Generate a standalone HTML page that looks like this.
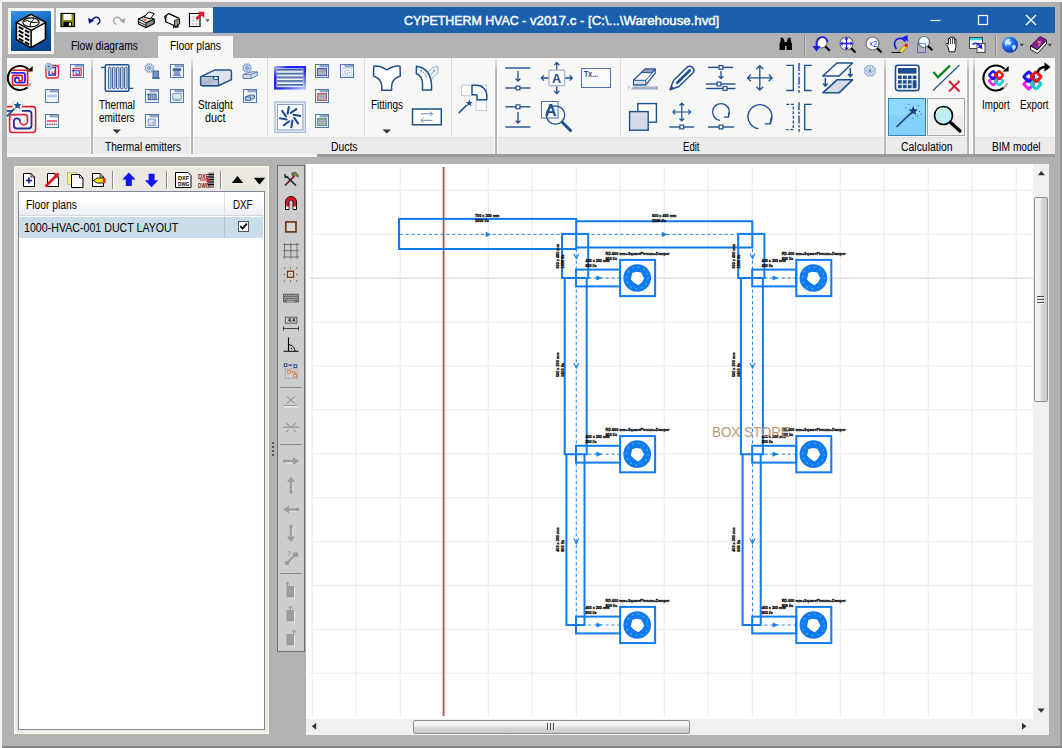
<!DOCTYPE html>
<html><head><meta charset="utf-8"><title>CYPETHERM HVAC</title>
<style>
*{box-sizing:border-box;margin:0;padding:0}
html,body{width:1062px;height:748px;overflow:hidden}
body{background:#b2b2b2;font-family:"Liberation Sans",sans-serif;font-size:12px;color:#000;position:relative}
.a{position:absolute}
.t{position:absolute;white-space:nowrap;line-height:1;transform-origin:0 0}
svg{position:absolute;left:0;top:0;overflow:visible}
</style></head><body>
<div class="a" style="left:0px;top:0px;width:1062px;height:2px;background:#f2f2f2;"></div>
<div class="a" style="left:0px;top:0px;width:2px;height:748px;background:#f2f2f2;"></div>
<div class="a" style="left:1060.4px;top:2px;width:1.6px;height:746px;background:#979797;"></div>
<div class="a" style="left:2px;top:746.2px;width:1060px;height:1.8px;background:#858585;"></div>
<div class="a" style="left:8px;top:8px;width:46px;height:46px;background:#f4f4f4;"></div>
<div class="a" style="left:11px;top:11px;width:40px;height:40px;background:linear-gradient(165deg,#3a96ee 0%,#0d5db0 45%,#043f85 100%);"></div>
<div class="a" style="left:56px;top:8px;width:157px;height:24px;background:#f7f7f5;"></div>
<div class="a" style="left:213px;top:7px;width:842px;height:26px;background:#1a60ab;"></div>
<div class="a" style="left:158px;top:36px;width:75px;height:23px;background:#f7f7f5;"></div>
<div class="a" style="left:7px;top:58px;width:1048px;height:96px;background:#f7f7f5;"></div>
<div class="a" style="left:7px;top:137px;width:83px;height:17px;background:#ebebeb;"></div>
<div class="a" style="left:7px;top:137px;width:83px;height:1px;background:#dfdfdf;"></div>
<div class="a" style="left:94px;top:137px;width:96px;height:17px;background:#ebebeb;"></div>
<div class="a" style="left:94px;top:137px;width:96px;height:1px;background:#dfdfdf;"></div>
<div class="a" style="left:194px;top:137px;width:300px;height:17px;background:#ebebeb;"></div>
<div class="a" style="left:194px;top:137px;width:300px;height:1px;background:#dfdfdf;"></div>
<div class="a" style="left:498px;top:137px;width:385px;height:17px;background:#ebebeb;"></div>
<div class="a" style="left:498px;top:137px;width:385px;height:1px;background:#dfdfdf;"></div>
<div class="a" style="left:887px;top:137px;width:80px;height:17px;background:#ebebeb;"></div>
<div class="a" style="left:887px;top:137px;width:80px;height:1px;background:#dfdfdf;"></div>
<div class="a" style="left:975px;top:137px;width:80px;height:17px;background:#ebebeb;"></div>
<div class="a" style="left:975px;top:137px;width:80px;height:1px;background:#dfdfdf;"></div>
<div class="a" style="left:7px;top:154px;width:310px;height:3px;background:#f4f4f4;"></div>
<div class="a" style="left:317px;top:154px;width:738px;height:3px;background:#9b9b9b;"></div>
<div class="a" style="left:91px;top:58px;width:2.2px;height:96px;background:linear-gradient(90deg,#c9c9c9,#a9a9a9 55%,#c4c4c4);"></div>
<div class="a" style="left:91px;top:58px;width:2.2px;height:14px;background:linear-gradient(rgba(247,247,245,0.85),rgba(247,247,245,0));"></div>
<div class="a" style="left:191px;top:58px;width:2.2px;height:96px;background:linear-gradient(90deg,#c9c9c9,#a9a9a9 55%,#c4c4c4);"></div>
<div class="a" style="left:191px;top:58px;width:2.2px;height:14px;background:linear-gradient(rgba(247,247,245,0.85),rgba(247,247,245,0));"></div>
<div class="a" style="left:495.3px;top:58px;width:2.2px;height:96px;background:linear-gradient(90deg,#c9c9c9,#a9a9a9 55%,#c4c4c4);"></div>
<div class="a" style="left:495.3px;top:58px;width:2.2px;height:14px;background:linear-gradient(rgba(247,247,245,0.85),rgba(247,247,245,0));"></div>
<div class="a" style="left:884px;top:58px;width:2.2px;height:96px;background:linear-gradient(90deg,#c9c9c9,#a9a9a9 55%,#c4c4c4);"></div>
<div class="a" style="left:884px;top:58px;width:2.2px;height:14px;background:linear-gradient(rgba(247,247,245,0.85),rgba(247,247,245,0));"></div>
<div class="a" style="left:967.2px;top:58px;width:2.2px;height:96px;background:linear-gradient(90deg,#c9c9c9,#a9a9a9 55%,#c4c4c4);"></div>
<div class="a" style="left:967.2px;top:58px;width:2.2px;height:14px;background:linear-gradient(rgba(247,247,245,0.85),rgba(247,247,245,0));"></div>
<div class="a" style="left:973px;top:58px;width:2.2px;height:96px;background:linear-gradient(90deg,#c9c9c9,#a9a9a9 55%,#c4c4c4);"></div>
<div class="a" style="left:973px;top:58px;width:2.2px;height:14px;background:linear-gradient(rgba(247,247,245,0.85),rgba(247,247,245,0));"></div>
<div class="a" style="left:267px;top:58px;width:1px;height:78px;background:#dcdcdc;"></div>
<div class="a" style="left:268px;top:58px;width:1px;height:78px;background:#fcfcfc;"></div>
<div class="a" style="left:364px;top:58px;width:1px;height:78px;background:#dcdcdc;"></div>
<div class="a" style="left:365px;top:58px;width:1px;height:78px;background:#fcfcfc;"></div>
<div class="a" style="left:451px;top:58px;width:1px;height:78px;background:#dcdcdc;"></div>
<div class="a" style="left:452px;top:58px;width:1px;height:78px;background:#fcfcfc;"></div>
<div class="a" style="left:620px;top:58px;width:1px;height:78px;background:#dcdcdc;"></div>
<div class="a" style="left:621px;top:58px;width:1px;height:78px;background:#fcfcfc;"></div>
<div class="a" style="left:888px;top:98px;width:38px;height:38px;background:linear-gradient(#8dd8fd 0%,#8dd8fd 45%,#84d0fc 46%,#84d0fc 100%);border:1px solid #3482bd"></div>
<div class="a" style="left:927px;top:98px;width:38px;height:38px;background:linear-gradient(#f6f6f4 0%,#f6f6f4 45%,#ededeb 46%,#ededeb 100%);border:1px solid #a3a3a3;box-shadow:inset 0 0 0 1px #f8f8f8"></div>
<div class="a" style="left:13.2px;top:164.6px;width:256.7px;height:570.3px;background:#ebe8e2;border:0.8px solid #b3b09f;box-shadow:inset 0 0 0 1.2px #fdfdfb"></div>
<div class="a" style="left:18px;top:191px;width:247px;height:539px;background:#fff;border:1px solid #7f889b"></div>
<div class="a" style="left:19px;top:192px;width:243.5px;height:23px;background:linear-gradient(#ffffff 0%,#ffffff 35%,#eceef3 100%);"></div>
<div class="a" style="left:19px;top:215px;width:243.5px;height:1px;background:#d5d8de;"></div>
<div class="a" style="left:224px;top:192px;width:1px;height:45px;background:#dcdfe4;"></div>
<div class="a" style="left:19px;top:217px;width:243.5px;height:20.5px;background:#c9dde8;"></div>
<div class="a" style="left:224px;top:217px;width:1px;height:20.5px;background:#b4c6d2;"></div>
<div class="a" style="left:238px;top:221px;width:11px;height:11px;background:#fff;border:1px solid #555"></div>
<div class="a" style="left:112px;top:171px;width:1px;height:18px;background:#8f8f8f;"></div>
<div class="a" style="left:113px;top:171px;width:1px;height:18px;background:#fbfbfb;"></div>
<div class="a" style="left:166px;top:171px;width:1px;height:18px;background:#8f8f8f;"></div>
<div class="a" style="left:167px;top:171px;width:1px;height:18px;background:#fbfbfb;"></div>
<div class="a" style="left:220px;top:171px;width:1px;height:18px;background:#8f8f8f;"></div>
<div class="a" style="left:221px;top:171px;width:1px;height:18px;background:#fbfbfb;"></div>
<div class="a" style="left:272px;top:442px;width:2px;height:2px;background:#5a5a5a;"></div>
<div class="a" style="left:272px;top:446px;width:2px;height:2px;background:#5a5a5a;"></div>
<div class="a" style="left:272px;top:450px;width:2px;height:2px;background:#5a5a5a;"></div>
<div class="a" style="left:272px;top:454px;width:2px;height:2px;background:#5a5a5a;"></div>
<div class="a" style="left:277px;top:165px;width:28px;height:487px;background:#cdcdcd;border:1px solid #6e6e6e"></div>
<div class="a" style="left:280px;top:387px;width:22px;height:1px;background:#8a8a8a;"></div>
<div class="a" style="left:280px;top:444px;width:22px;height:1px;background:#8a8a8a;"></div>
<div class="a" style="left:280px;top:573px;width:22px;height:1px;background:#8a8a8a;"></div>
<div class="a" style="left:306px;top:164px;width:727px;height:555px;background:#fff;"></div>
<div class="a" style="left:1033px;top:164px;width:16px;height:555px;background:#f0f0f0;"></div>
<div class="a" style="left:306px;top:719px;width:743px;height:16px;background:#f0f0f0;"></div>
<div class="a" style="left:1033.5px;top:197px;width:14px;height:205px;background:linear-gradient(90deg,#f7f7f7 0%,#ececec 45%,#d6d6da 55%,#cbcbd0 100%);border:1px solid #8e8e8e;border-radius:2px"></div>
<div class="a" style="left:1036.5px;top:296px;width:7.5px;height:1px;background:#4a4a4a;"></div>
<div class="a" style="left:1036.5px;top:297px;width:7.5px;height:1px;background:#f4f4f4;"></div>
<div class="a" style="left:1036.5px;top:299px;width:7.5px;height:1px;background:#4a4a4a;"></div>
<div class="a" style="left:1036.5px;top:300px;width:7.5px;height:1px;background:#f4f4f4;"></div>
<div class="a" style="left:1036.5px;top:302px;width:7.5px;height:1px;background:#4a4a4a;"></div>
<div class="a" style="left:1036.5px;top:303px;width:7.5px;height:1px;background:#f4f4f4;"></div>
<div class="a" style="left:412.5px;top:719.5px;width:277px;height:14px;background:linear-gradient(#f7f7f7 0%,#ececec 45%,#d8d8d8 55%,#c8c8c8 100%);border:1px solid #8e8e8e;border-radius:2px"></div>
<div class="a" style="left:547px;top:723px;width:1px;height:7px;background:#4a4a4a;"></div>
<div class="a" style="left:548px;top:723px;width:1px;height:7px;background:#f4f4f4;"></div>
<div class="a" style="left:550px;top:723px;width:1px;height:7px;background:#4a4a4a;"></div>
<div class="a" style="left:551px;top:723px;width:1px;height:7px;background:#f4f4f4;"></div>
<div class="a" style="left:553px;top:723px;width:1px;height:7px;background:#4a4a4a;"></div>
<div class="a" style="left:554px;top:723px;width:1px;height:7px;background:#f4f4f4;"></div>
<svg width="1062" height="748" viewBox="0 0 1062 748">
<path d="M930.5 20.5h10" stroke="#fff" stroke-width="1.2" fill="none"/>
<rect x="978.5" y="15.5" width="9" height="9" stroke="#fff" stroke-width="1.2" fill="none"/>
<path d="M1026 15l10 10M1036 15l-10 10" stroke="#fff" stroke-width="1.4" fill="none"/>
<path d="M112.5 129.5h8.5l-4.25 4z" fill="#333"/>
<path d="M382.5 129.5h8.5l-4.25 4z" fill="#333"/>
<path d="M240.3 226l2.3 2.6 4.3-5" stroke="#000" stroke-width="1.7" fill="none"/>
<path d="M1037.8 175.2l3.600-4.200 3.600 4.200z" fill="#333"/>
<path d="M1037.5 708.500h7.200l-3.600 4.200z" fill="#333"/>
<path d="M316.2 722.800v7l-4.400-3.500z" fill="#333"/>
<path d="M1022 722.800v7l4.400-3.500z" fill="#333"/>
<rect x="311.55" y="167" width="1.5" height="549" fill="#f0f0f0"/>
<rect x="355.55" y="167" width="1.5" height="549" fill="#f0f0f0"/>
<rect x="399.55" y="167" width="1.5" height="549" fill="#f0f0f0"/>
<rect x="487.55" y="167" width="1.5" height="549" fill="#f0f0f0"/>
<rect x="531.55" y="167" width="1.5" height="549" fill="#f0f0f0"/>
<rect x="575.55" y="167" width="1.5" height="549" fill="#f0f0f0"/>
<rect x="619.55" y="167" width="1.5" height="549" fill="#f0f0f0"/>
<rect x="663.55" y="167" width="1.5" height="549" fill="#f0f0f0"/>
<rect x="707.55" y="167" width="1.5" height="549" fill="#f0f0f0"/>
<rect x="751.55" y="167" width="1.5" height="549" fill="#f0f0f0"/>
<rect x="795.55" y="167" width="1.5" height="549" fill="#f0f0f0"/>
<rect x="839.55" y="167" width="1.5" height="549" fill="#f0f0f0"/>
<rect x="883.55" y="167" width="1.5" height="549" fill="#f0f0f0"/>
<rect x="927.55" y="167" width="1.5" height="549" fill="#f0f0f0"/>
<rect x="971.55" y="167" width="1.5" height="549" fill="#f0f0f0"/>
<rect x="1015.55" y="167" width="1.5" height="549" fill="#f0f0f0"/>
<rect x="310" y="189.65" width="723" height="1.5" fill="#f0f0f0"/>
<rect x="310" y="233.55" width="723" height="1.5" fill="#f0f0f0"/>
<rect x="310" y="277.65" width="723" height="1.1" fill="#d2d2d2"/>
<rect x="310" y="321.35" width="723" height="1.5" fill="#f0f0f0"/>
<rect x="310" y="365.25" width="723" height="1.5" fill="#f0f0f0"/>
<rect x="310" y="409.15" width="723" height="1.5" fill="#f0f0f0"/>
<rect x="310" y="453.05" width="723" height="1.5" fill="#f0f0f0"/>
<rect x="310" y="496.95" width="723" height="1.5" fill="#f0f0f0"/>
<rect x="310" y="540.85" width="723" height="1.5" fill="#f0f0f0"/>
<rect x="310" y="584.75" width="723" height="1.5" fill="#f0f0f0"/>
<rect x="310" y="628.65" width="723" height="1.5" fill="#f0f0f0"/>
<rect x="310" y="672.55" width="723" height="1.5" fill="#f0f0f0"/>
<rect x="442.2" y="167" width="0.9" height="549" fill="#dcc0aa"/><rect x="443" y="167" width="1.5" height="549" fill="#9e5c4e"/><rect x="444.4" y="167" width="0.7" height="549" fill="#dca3ab"/>
<rect x="399" y="218.9" width="177.20" height="30.10" fill="none" stroke="#0f7bef" stroke-width="2"/>
<path d="M576.2 221.3H752.3V247.5H576.2" fill="none" stroke="#0f7bef" stroke-width="2"/>
<path d="M400 234.4L752 234.4" stroke="#0f7bef" stroke-width="0.9" stroke-dasharray="3 2.8" fill="none"/>
<path d="M486 232.3L490.2 234.4L486 236.5z" fill="#0f7bef" stroke="#0f7bef" stroke-width="0.7"/>
<path d="M662.3 232.3L666.5 234.4L662.3 236.5z" fill="#0f7bef" stroke="#0f7bef" stroke-width="0.7"/>
<rect x="562" y="233.9" width="26.20" height="44.10" fill="none" stroke="#0f7bef" stroke-width="2"/>
<path d="M564.7 278V454.2H586.7V278" fill="none" stroke="#0f7bef" stroke-width="2"/>
<path d="M566.4 454.2V624.9H584.5V454.2" fill="none" stroke="#0f7bef" stroke-width="2"/>
<path d="M576.3 249L576.3 616" stroke="#0f7bef" stroke-width="0.9" stroke-dasharray="3 2.8" fill="none"/>
<path d="M573.6999999999999 253.5L576.3 258.5L578.9 253.5" fill="none" stroke="#0f7bef" stroke-width="1.1"/>
<path d="M573.6999999999999 363.0L576.3 368.0L578.9 363.0" fill="none" stroke="#0f7bef" stroke-width="1.1"/>
<path d="M573.6999999999999 538.5L576.3 543.5L578.9 538.5" fill="none" stroke="#0f7bef" stroke-width="1.1"/>
<rect x="576.0" y="269.6" width="44.00" height="16.80" fill="none" stroke="#0f7bef" stroke-width="2"/>
<path d="M588.3 278L620 278" stroke="#0f7bef" stroke-width="0.9" stroke-dasharray="3 2.8" fill="none"/>
<path d="M596.8 275.9L601.0 278L596.8 280.1z" fill="#0f7bef" stroke="#0f7bef" stroke-width="0.7"/>
<rect x="620.1" y="259.9" width="35.00" height="36.20" fill="none" stroke="#0f7bef" stroke-width="2"/>
<circle cx="637.2" cy="278" r="13.85" fill="#0f7bef"/>
<polygon points="632.2,273.1 636.2,271.7 641.1,272.5 644.1,278.4 641.7,282.4 638.4,285.2 633.8,282.6 630.9,279.4" fill="#fff"/>
<circle cx="637.2" cy="278" r="10.8" fill="none" stroke="#8ec0f8" stroke-width="1.1" stroke-dasharray="1.2 4.5"/>
<rect x="576.0" y="445.8" width="44.00" height="16.80" fill="none" stroke="#0f7bef" stroke-width="2"/>
<path d="M588.3 454.2L620 454.2" stroke="#0f7bef" stroke-width="0.9" stroke-dasharray="3 2.8" fill="none"/>
<path d="M596.8 452.09999999999997L601.0 454.2L596.8 456.3z" fill="#0f7bef" stroke="#0f7bef" stroke-width="0.7"/>
<rect x="620.1" y="436.09999999999997" width="35.00" height="36.20" fill="none" stroke="#0f7bef" stroke-width="2"/>
<circle cx="637.2" cy="454.2" r="13.85" fill="#0f7bef"/>
<polygon points="632.2,449.3 636.2,447.9 641.1,448.7 644.1,454.6 641.7,458.6 638.4,461.4 633.8,458.8 630.9,455.6" fill="#fff"/>
<circle cx="637.2" cy="454.2" r="10.8" fill="none" stroke="#8ec0f8" stroke-width="1.1" stroke-dasharray="1.2 4.5"/>
<rect x="576.0" y="616.6" width="44.00" height="16.80" fill="none" stroke="#0f7bef" stroke-width="2"/>
<path d="M588.3 625L620 625" stroke="#0f7bef" stroke-width="0.9" stroke-dasharray="3 2.8" fill="none"/>
<path d="M596.8 622.9L601.0 625L596.8 627.1z" fill="#0f7bef" stroke="#0f7bef" stroke-width="0.7"/>
<rect x="620.1" y="606.9" width="35.00" height="36.20" fill="none" stroke="#0f7bef" stroke-width="2"/>
<circle cx="637.2" cy="625" r="13.85" fill="#0f7bef"/>
<polygon points="632.2,620.1 636.2,618.7 641.1,619.5 644.1,625.4 641.7,629.4 638.4,632.2 633.8,629.6 630.9,626.4" fill="#fff"/>
<circle cx="637.2" cy="625" r="10.8" fill="none" stroke="#8ec0f8" stroke-width="1.1" stroke-dasharray="1.2 4.5"/>
<rect x="738.2" y="233.9" width="26.20" height="44.10" fill="none" stroke="#0f7bef" stroke-width="2"/>
<path d="M740.9000000000001 278V454.2H762.9000000000001V278" fill="none" stroke="#0f7bef" stroke-width="2"/>
<path d="M742.5999999999999 454.2V624.9H760.7V454.2" fill="none" stroke="#0f7bef" stroke-width="2"/>
<path d="M752.5 249L752.5 616" stroke="#0f7bef" stroke-width="0.9" stroke-dasharray="3 2.8" fill="none"/>
<path d="M749.9 253.5L752.5 258.5L755.1 253.5" fill="none" stroke="#0f7bef" stroke-width="1.1"/>
<path d="M749.9 363.0L752.5 368.0L755.1 363.0" fill="none" stroke="#0f7bef" stroke-width="1.1"/>
<path d="M749.9 538.5L752.5 543.5L755.1 538.5" fill="none" stroke="#0f7bef" stroke-width="1.1"/>
<rect x="752.2" y="269.6" width="44.00" height="16.80" fill="none" stroke="#0f7bef" stroke-width="2"/>
<path d="M764.5 278L796.2 278" stroke="#0f7bef" stroke-width="0.9" stroke-dasharray="3 2.8" fill="none"/>
<path d="M773.0 275.9L777.2 278L773.0 280.1z" fill="#0f7bef" stroke="#0f7bef" stroke-width="0.7"/>
<rect x="796.3000000000001" y="259.9" width="35.00" height="36.20" fill="none" stroke="#0f7bef" stroke-width="2"/>
<circle cx="813.4000000000001" cy="278" r="13.85" fill="#0f7bef"/>
<polygon points="808.4,273.1 812.4,271.7 817.3,272.5 820.3,278.4 817.9,282.4 814.6,285.2 810.0,282.6 807.1,279.4" fill="#fff"/>
<circle cx="813.4000000000001" cy="278" r="10.8" fill="none" stroke="#8ec0f8" stroke-width="1.1" stroke-dasharray="1.2 4.5"/>
<rect x="752.2" y="445.8" width="44.00" height="16.80" fill="none" stroke="#0f7bef" stroke-width="2"/>
<path d="M764.5 454.2L796.2 454.2" stroke="#0f7bef" stroke-width="0.9" stroke-dasharray="3 2.8" fill="none"/>
<path d="M773.0 452.09999999999997L777.2 454.2L773.0 456.3z" fill="#0f7bef" stroke="#0f7bef" stroke-width="0.7"/>
<rect x="796.3000000000001" y="436.09999999999997" width="35.00" height="36.20" fill="none" stroke="#0f7bef" stroke-width="2"/>
<circle cx="813.4000000000001" cy="454.2" r="13.85" fill="#0f7bef"/>
<polygon points="808.4,449.3 812.4,447.9 817.3,448.7 820.3,454.6 817.9,458.6 814.6,461.4 810.0,458.8 807.1,455.6" fill="#fff"/>
<circle cx="813.4000000000001" cy="454.2" r="10.8" fill="none" stroke="#8ec0f8" stroke-width="1.1" stroke-dasharray="1.2 4.5"/>
<rect x="752.2" y="616.6" width="44.00" height="16.80" fill="none" stroke="#0f7bef" stroke-width="2"/>
<path d="M764.5 625L796.2 625" stroke="#0f7bef" stroke-width="0.9" stroke-dasharray="3 2.8" fill="none"/>
<path d="M773.0 622.9L777.2 625L773.0 627.1z" fill="#0f7bef" stroke="#0f7bef" stroke-width="0.7"/>
<rect x="796.3000000000001" y="606.9" width="35.00" height="36.20" fill="none" stroke="#0f7bef" stroke-width="2"/>
<circle cx="813.4000000000001" cy="625" r="13.85" fill="#0f7bef"/>
<polygon points="808.4,620.1 812.4,618.7 817.3,619.5 820.3,625.4 817.9,629.4 814.6,632.2 810.0,629.6 807.1,626.4" fill="#fff"/>
<circle cx="813.4000000000001" cy="625" r="10.8" fill="none" stroke="#8ec0f8" stroke-width="1.1" stroke-dasharray="1.2 4.5"/>
<g font-family="Liberation Sans, sans-serif"><text x="475" y="217" font-size="4.2" font-weight="bold" fill="#000" stroke="#000" stroke-width="0.28" textLength="24.3" lengthAdjust="spacingAndGlyphs">700 x 300 mm</text>
<text x="475" y="222.2" font-size="4.2" font-weight="bold" fill="#000" stroke="#000" stroke-width="0.28" textLength="13.8" lengthAdjust="spacingAndGlyphs">3000 l/s</text>
<text x="652" y="217" font-size="4.2" font-weight="bold" fill="#000" stroke="#000" stroke-width="0.28" textLength="24.3" lengthAdjust="spacingAndGlyphs">600 x 400 mm</text>
<text x="652" y="222.2" font-size="4.2" font-weight="bold" fill="#000" stroke="#000" stroke-width="0.28" textLength="13.8" lengthAdjust="spacingAndGlyphs">1600 l/s</text>
<text x="605.5" y="254.8" font-size="4.2" font-weight="bold" fill="#000" stroke="#000" stroke-width="0.28" textLength="64" lengthAdjust="spacingAndGlyphs">RD-600 mm+SquarePlenum+Damper</text>
<text x="605.5" y="259.5" font-size="4.2" font-weight="bold" fill="#000" stroke="#000" stroke-width="0.28" textLength="11.5" lengthAdjust="spacingAndGlyphs">800 l/s</text>
<text x="585.5" y="261.5" font-size="4.2" font-weight="bold" fill="#000" stroke="#000" stroke-width="0.28" textLength="24" lengthAdjust="spacingAndGlyphs">400 x 300 mm</text>
<text x="585.5" y="266.5" font-size="4.2" font-weight="bold" fill="#000" stroke="#000" stroke-width="0.28" textLength="11" lengthAdjust="spacingAndGlyphs">800 l/s</text>
<text x="605.5" y="431.0" font-size="4.2" font-weight="bold" fill="#000" stroke="#000" stroke-width="0.28" textLength="64" lengthAdjust="spacingAndGlyphs">RD-600 mm+SquarePlenum+Damper</text>
<text x="605.5" y="435.7" font-size="4.2" font-weight="bold" fill="#000" stroke="#000" stroke-width="0.28" textLength="11.5" lengthAdjust="spacingAndGlyphs">800 l/s</text>
<text x="585.5" y="437.7" font-size="4.2" font-weight="bold" fill="#000" stroke="#000" stroke-width="0.28" textLength="24" lengthAdjust="spacingAndGlyphs">400 x 300 mm</text>
<text x="585.5" y="442.7" font-size="4.2" font-weight="bold" fill="#000" stroke="#000" stroke-width="0.28" textLength="11" lengthAdjust="spacingAndGlyphs">800 l/s</text>
<text x="605.5" y="601.8" font-size="4.2" font-weight="bold" fill="#000" stroke="#000" stroke-width="0.28" textLength="64" lengthAdjust="spacingAndGlyphs">RD-600 mm+SquarePlenum+Damper</text>
<text x="605.5" y="606.5" font-size="4.2" font-weight="bold" fill="#000" stroke="#000" stroke-width="0.28" textLength="11.5" lengthAdjust="spacingAndGlyphs">800 l/s</text>
<text x="585.5" y="608.5" font-size="4.2" font-weight="bold" fill="#000" stroke="#000" stroke-width="0.28" textLength="24" lengthAdjust="spacingAndGlyphs">400 x 300 mm</text>
<text x="585.5" y="613.5" font-size="4.2" font-weight="bold" fill="#000" stroke="#000" stroke-width="0.28" textLength="11" lengthAdjust="spacingAndGlyphs">800 l/s</text>
<text x="559.2" y="268.5" font-size="4.2" font-weight="bold" fill="#000" stroke="#000" stroke-width="0.28" transform="rotate(-90 559.2 268.5)" textLength="24.5" lengthAdjust="spacingAndGlyphs">600 x 400 mm</text>
<text x="563.9" y="268.5" font-size="4.2" font-weight="bold" fill="#000" stroke="#000" stroke-width="0.28" transform="rotate(-90 563.9 268.5)" textLength="14" lengthAdjust="spacingAndGlyphs">1600 l/s</text>
<text x="559.2" y="377" font-size="4.2" font-weight="bold" fill="#000" stroke="#000" stroke-width="0.28" transform="rotate(-90 559.2 377)" textLength="24.5" lengthAdjust="spacingAndGlyphs">500 x 300 mm</text>
<text x="563.9" y="377" font-size="4.2" font-weight="bold" fill="#000" stroke="#000" stroke-width="0.28" transform="rotate(-90 563.9 377)" textLength="14" lengthAdjust="spacingAndGlyphs">1600 l/s</text>
<text x="559.2" y="551.8" font-size="4.2" font-weight="bold" fill="#000" stroke="#000" stroke-width="0.28" transform="rotate(-90 559.2 551.8)" textLength="24.5" lengthAdjust="spacingAndGlyphs">400 x 300 mm</text>
<text x="563.9" y="551.8" font-size="4.2" font-weight="bold" fill="#000" stroke="#000" stroke-width="0.28" transform="rotate(-90 563.9 551.8)" textLength="12" lengthAdjust="spacingAndGlyphs">800 l/s</text>
<text x="781.7" y="254.8" font-size="4.2" font-weight="bold" fill="#000" stroke="#000" stroke-width="0.28" textLength="64" lengthAdjust="spacingAndGlyphs">RD-600 mm+SquarePlenum+Damper</text>
<text x="781.7" y="259.5" font-size="4.2" font-weight="bold" fill="#000" stroke="#000" stroke-width="0.28" textLength="11.5" lengthAdjust="spacingAndGlyphs">800 l/s</text>
<text x="761.7" y="261.5" font-size="4.2" font-weight="bold" fill="#000" stroke="#000" stroke-width="0.28" textLength="24" lengthAdjust="spacingAndGlyphs">400 x 300 mm</text>
<text x="761.7" y="266.5" font-size="4.2" font-weight="bold" fill="#000" stroke="#000" stroke-width="0.28" textLength="11" lengthAdjust="spacingAndGlyphs">800 l/s</text>
<text x="781.7" y="431.0" font-size="4.2" font-weight="bold" fill="#000" stroke="#000" stroke-width="0.28" textLength="64" lengthAdjust="spacingAndGlyphs">RD-600 mm+SquarePlenum+Damper</text>
<text x="781.7" y="435.7" font-size="4.2" font-weight="bold" fill="#000" stroke="#000" stroke-width="0.28" textLength="11.5" lengthAdjust="spacingAndGlyphs">800 l/s</text>
<text x="761.7" y="437.7" font-size="4.2" font-weight="bold" fill="#000" stroke="#000" stroke-width="0.28" textLength="24" lengthAdjust="spacingAndGlyphs">400 x 300 mm</text>
<text x="761.7" y="442.7" font-size="4.2" font-weight="bold" fill="#000" stroke="#000" stroke-width="0.28" textLength="11" lengthAdjust="spacingAndGlyphs">800 l/s</text>
<text x="781.7" y="601.8" font-size="4.2" font-weight="bold" fill="#000" stroke="#000" stroke-width="0.28" textLength="64" lengthAdjust="spacingAndGlyphs">RD-600 mm+SquarePlenum+Damper</text>
<text x="781.7" y="606.5" font-size="4.2" font-weight="bold" fill="#000" stroke="#000" stroke-width="0.28" textLength="11.5" lengthAdjust="spacingAndGlyphs">800 l/s</text>
<text x="761.7" y="608.5" font-size="4.2" font-weight="bold" fill="#000" stroke="#000" stroke-width="0.28" textLength="24" lengthAdjust="spacingAndGlyphs">400 x 300 mm</text>
<text x="761.7" y="613.5" font-size="4.2" font-weight="bold" fill="#000" stroke="#000" stroke-width="0.28" textLength="11" lengthAdjust="spacingAndGlyphs">800 l/s</text>
<text x="735.4000000000001" y="268.5" font-size="4.2" font-weight="bold" fill="#000" stroke="#000" stroke-width="0.28" transform="rotate(-90 735.4000000000001 268.5)" textLength="24.5" lengthAdjust="spacingAndGlyphs">600 x 400 mm</text>
<text x="740.0999999999999" y="268.5" font-size="4.2" font-weight="bold" fill="#000" stroke="#000" stroke-width="0.28" transform="rotate(-90 740.0999999999999 268.5)" textLength="14" lengthAdjust="spacingAndGlyphs">1600 l/s</text>
<text x="735.4000000000001" y="377" font-size="4.2" font-weight="bold" fill="#000" stroke="#000" stroke-width="0.28" transform="rotate(-90 735.4000000000001 377)" textLength="24.5" lengthAdjust="spacingAndGlyphs">500 x 300 mm</text>
<text x="740.0999999999999" y="377" font-size="4.2" font-weight="bold" fill="#000" stroke="#000" stroke-width="0.28" transform="rotate(-90 740.0999999999999 377)" textLength="14" lengthAdjust="spacingAndGlyphs">1600 l/s</text>
<text x="735.4000000000001" y="551.8" font-size="4.2" font-weight="bold" fill="#000" stroke="#000" stroke-width="0.28" transform="rotate(-90 735.4000000000001 551.8)" textLength="24.5" lengthAdjust="spacingAndGlyphs">400 x 300 mm</text>
<text x="740.0999999999999" y="551.8" font-size="4.2" font-weight="bold" fill="#000" stroke="#000" stroke-width="0.28" transform="rotate(-90 740.0999999999999 551.8)" textLength="12" lengthAdjust="spacingAndGlyphs">800 l/s</text></g>
<path d="M28.31 69.30A12.1 12.1 0 1 0 27.35 87.53" fill="none" stroke="#000" stroke-width="1.9"/>
<path d="M27.35 87.53A12.1 12.1 0 0 0 30.95 82.92" fill="none" stroke="#000" stroke-opacity="0.3" stroke-width="1.9"/>
<path d="M26.60 71.60L32.60 65.90V71.60z" fill="#000"/>
<path d="M12 70.3H27.6V84a1.2 1.2 0 0 1-1.2 1.2H13.7a1.2 1.2 0 0 1-1.2-1.2V76.6a1.2 1.2 0 0 1 1.2-1.2H21.1a1.2 1.2 0 0 1 1.2 1.2V79.3a1.8 1.8 0 0 1-3.6 0" fill="none" stroke="#fa1414" stroke-width="1.6"/>
<path d="M11.2 72.9H23.5a1.5 1.5 0 0 1 1.5 1.5V81.1a1.5 1.5 0 0 1-1.5 1.5H16.5a1.5 1.5 0 0 1-1.5-1.5V79.3a1.85 1.85 0 0 1 3.7 0" fill="none" stroke="#2a2af5" stroke-width="1.9"/>
<path d="M7 106.6H32.6a3 3 0 0 1 3 3V129.5a3 3 0 0 1 -3 3H12.6a3 3 0 0 1 -3 -3V117.6a3 3 0 0 1 3 -3H24.5a3 3 0 0 1 3 3V121a3.75 3.75 0 0 1 -7.5 0" fill="none" stroke="#da1f3b" stroke-width="1.6"/>
<path d="M7 110.8H28.5a3 3 0 0 1 3 3V125.5a3 3 0 0 1 -3 3H16.9a3 3 0 0 1 -3 -3V121.5a3.05 3.05 0 0 1 6.1 0" fill="none" stroke="#24348f" stroke-width="1.8"/>
<rect x="12.3" y="104" width="9.6" height="8.3" fill="#f7f7f5"/>
<path d="M7 116.3L14.3 108.7" stroke="#1d4f8e" stroke-width="1.9" fill="none"/>
<path d="M17.6 101.2l1.15 2.75 2.95.2-2.25 1.95.75 2.9-2.6-1.6-2.6 1.6.75-2.9-2.25-1.95 2.95-.2z" fill="#1d4f8e"/>
<rect x="12.2" y="102.6" width="0.8" height="0.8" fill="#6f93c8"/>
<rect x="13.6" y="100.8" width="0.8" height="0.8" fill="#6f93c8"/>
<rect x="20.1" y="101.39999999999999" width="0.8" height="0.8" fill="#6f93c8"/>
<rect x="22.400000000000002" y="104.1" width="0.8" height="0.8" fill="#6f93c8"/>
<rect x="21.1" y="108.6" width="0.8" height="0.8" fill="#6f93c8"/>
<rect x="18.6" y="110.6" width="0.8" height="0.8" fill="#6f93c8"/>
<rect x="16.1" y="110.1" width="0.8" height="0.8" fill="#6f93c8"/>
<rect x="12.1" y="105.6" width="0.8" height="0.8" fill="#6f93c8"/>
<rect x="46" y="65.5" width="12.5" height="12.5" rx="2.5" fill="none" stroke="#e8202c" stroke-width="1.3"/>
<path d="M52 67.5H55.5V75H49V70.5" fill="none" stroke="#2233cc" stroke-width="1.3"/>
<path d="M52 71.5a1.6 1.6 0 1 0 2 -1" fill="none" stroke="#e8202c" stroke-width="1.1"/>
<circle cx="51.26" cy="67.82" r="1.08" fill="#d3ddee" stroke="#7391c4" stroke-width="0.8"/><circle cx="49.82" cy="69.26" r="1.08" fill="#d3ddee" stroke="#7391c4" stroke-width="0.8"/><circle cx="47.78" cy="69.26" r="1.08" fill="#d3ddee" stroke="#7391c4" stroke-width="0.8"/><circle cx="46.34" cy="67.82" r="1.08" fill="#d3ddee" stroke="#7391c4" stroke-width="0.8"/><circle cx="46.34" cy="65.78" r="1.08" fill="#d3ddee" stroke="#7391c4" stroke-width="0.8"/><circle cx="47.78" cy="64.34" r="1.08" fill="#d3ddee" stroke="#7391c4" stroke-width="0.8"/><circle cx="49.82" cy="64.34" r="1.08" fill="#d3ddee" stroke="#7391c4" stroke-width="0.8"/><circle cx="51.26" cy="65.78" r="1.08" fill="#d3ddee" stroke="#7391c4" stroke-width="0.8"/><circle cx="48.8" cy="66.8" r="2.38" fill="#dbe4f2" stroke="none"/><circle cx="48.8" cy="66.8" r="1.44" fill="#f4f7fb" stroke="#7391c4" stroke-width="0.9"/><circle cx="48.8" cy="66.8" r="0.80" fill="#1d4f8e"/>
<rect x="70.5" y="64.5" width="13" height="13" fill="#f6f8fb" stroke="#4d78ba" stroke-width="1"/>
<rect x="74.5" y="65" width="8.5" height="2.4" fill="#98a4bd"/>
<g transform="translate(4.900 4.480) scale(0.93)"><rect x="73.5" y="69" width="8.5" height="7.5" fill="none" stroke="#e8202c" stroke-width="1.2"/><path d="M72 71.2H80V75H76.5V73" fill="none" stroke="#2233cc" stroke-width="1.1"/></g>
<rect x="45.5" y="89.5" width="13" height="13" fill="#f6f8fb" stroke="#4d78ba" stroke-width="1"/>
<rect x="49.5" y="90" width="8.5" height="2.4" fill="#98a4bd"/>
<g transform="translate(3.150 6.230) scale(0.93)"><path d="M47.5 96.5h2.2l1.6-1.7 1.6 1.7h1.2l1.6-1.7 1.6 1.7M47.5 96.5h2.2l1.6 1.7 1.6-1.7h1.2l1.6 1.7 1.6-1.7h0.6" fill="none" stroke="#6f93c8" stroke-width="0.8"/></g>
<rect x="45.5" y="114.5" width="13" height="13" fill="#f6f8fb" stroke="#4d78ba" stroke-width="1"/>
<rect x="49.5" y="115" width="8.5" height="2.4" fill="#98a4bd"/>
<g transform="translate(3.150 7.980) scale(0.93)"><rect x="47" y="120.5" width="11" height="2.2" fill="#ee6a7c"/><path d="M47 125h11" stroke="#222" stroke-width="1.2" stroke-dasharray="1.6 0.9"/></g>
<rect x="105.3" y="64.7" width="23.6" height="26.5" rx="1.5" fill="#fbfbfd" stroke="#1d4f8e" stroke-width="1.5"/>
<rect x="108.40" y="67.2" width="2.5" height="21.6" rx="1" fill="#d6dbe7" stroke="#1d4f8e" stroke-width="0.9"/>
<rect x="112.45" y="67.2" width="2.5" height="21.6" rx="1" fill="#d6dbe7" stroke="#1d4f8e" stroke-width="0.9"/>
<rect x="116.50" y="67.2" width="2.5" height="21.6" rx="1" fill="#d6dbe7" stroke="#1d4f8e" stroke-width="0.9"/>
<rect x="120.55" y="67.2" width="2.5" height="21.6" rx="1" fill="#d6dbe7" stroke="#1d4f8e" stroke-width="0.9"/>
<rect x="124.60" y="67.2" width="2.5" height="21.6" rx="1" fill="#d6dbe7" stroke="#1d4f8e" stroke-width="0.9"/>
<path d="M101 67.3h4.3M129 88.3h4.3" stroke="#1d4f8e" stroke-width="1.2"/>
<circle cx="152.31" cy="69.25" r="1.32" fill="#d3ddee" stroke="#7391c4" stroke-width="0.8"/><circle cx="150.55" cy="71.01" r="1.32" fill="#d3ddee" stroke="#7391c4" stroke-width="0.8"/><circle cx="148.05" cy="71.01" r="1.32" fill="#d3ddee" stroke="#7391c4" stroke-width="0.8"/><circle cx="146.29" cy="69.25" r="1.32" fill="#d3ddee" stroke="#7391c4" stroke-width="0.8"/><circle cx="146.29" cy="66.75" r="1.32" fill="#d3ddee" stroke="#7391c4" stroke-width="0.8"/><circle cx="148.05" cy="64.99" r="1.32" fill="#d3ddee" stroke="#7391c4" stroke-width="0.8"/><circle cx="150.55" cy="64.99" r="1.32" fill="#d3ddee" stroke="#7391c4" stroke-width="0.8"/><circle cx="152.31" cy="66.75" r="1.32" fill="#d3ddee" stroke="#7391c4" stroke-width="0.8"/><circle cx="149.3" cy="68" r="2.90" fill="#dbe4f2" stroke="none"/><circle cx="149.3" cy="68" r="1.76" fill="#f4f7fb" stroke="#7391c4" stroke-width="0.9"/><circle cx="149.3" cy="68" r="0.80" fill="#1d4f8e"/>
<rect x="153" y="71" width="5.5" height="7" fill="#7e97c2" stroke="#1d4f8e" stroke-width="0.8"/><path d="M152 78.3h8" stroke="#1d4f8e" stroke-width="0.8"/>
<rect x="170.5" y="64.5" width="13" height="13" fill="#f6f8fb" stroke="#4d78ba" stroke-width="1"/>
<rect x="174.5" y="65" width="8.5" height="2.4" fill="#98a4bd"/>
<g transform="translate(11.900 4.480) scale(0.93)"><rect x="173" y="68.5" width="9" height="3.2" fill="#3d67ae"/><rect x="174" y="71.7" width="7" height="4.5" fill="#7f9acb"/><path d="M173 76.5h9" stroke="#3d67ae" stroke-width="0.8"/></g>
<rect x="145.5" y="89.5" width="13" height="13" fill="#f6f8fb" stroke="#4d78ba" stroke-width="1"/>
<rect x="149.5" y="90" width="8.5" height="2.4" fill="#98a4bd"/>
<g transform="translate(10.150 6.230) scale(0.93)"><rect x="148.5" y="94.5" width="8.5" height="6" fill="#b8c4da" stroke="#1d4f8e" stroke-width="0.9"/><path d="M150.5 95v5M152.7 95v5M154.9 95v5" stroke="#1d4f8e" stroke-width="0.7"/><path d="M146.5 95h2M157 100h2" stroke="#1d4f8e" stroke-width="0.8"/></g>
<rect x="170.5" y="89.5" width="13" height="13" fill="#f6f8fb" stroke="#4d78ba" stroke-width="1"/>
<rect x="174.5" y="90" width="8.5" height="2.4" fill="#98a4bd"/>
<g transform="translate(11.900 6.230) scale(0.93)"><rect x="173" y="94" width="9" height="6" fill="#e3e8f1" stroke="#6f8fc2" stroke-width="0.9"/><path d="M173 101.3h9" stroke="#8aa2cb" stroke-width="1"/></g>
<rect x="145.5" y="114.5" width="13" height="13" fill="#f6f8fb" stroke="#4d78ba" stroke-width="1"/>
<rect x="149.5" y="115" width="8.5" height="2.4" fill="#98a4bd"/>
<g transform="translate(10.150 7.980) scale(0.93)"><rect x="148.5" y="119.5" width="7.5" height="7" fill="#e6eaf2" stroke="#5f82ba" stroke-width="0.9"/><path d="M149 126l6.5-6v6z" fill="#b9c5da"/></g>
<defs><linearGradient id="dg" x1="0" y1="0" x2="1" y2="1"><stop offset="0" stop-color="#c9cedb"/><stop offset="0.5" stop-color="#aeb6c9"/><stop offset="1" stop-color="#d3d7e2"/></linearGradient></defs>
<path d="M201.5 76.4L214.5 70.1H229.7Q231.4 70.1 231.4 71.8V79.6L218.4 85.8H202.2Q200.6 85.8 200.6 84.2V77.6Q200.6 76.6 201.5 76.4z" fill="#dfe2ea" stroke="#1d4f8e" stroke-width="1.5" stroke-linejoin="round"/>
<path d="M200.8 76.5H218.4V85.6H202.2Q200.8 85.6 200.8 84.2z" fill="url(#dg)" stroke="#1d4f8e" stroke-width="1.2"/>
<rect x="213.6" y="76.6" width="4.5" height="2.9" rx="0.9" fill="#fff" stroke="#1d4f8e" stroke-width="1.1"/>
<circle cx="249.94" cy="69.22" r="1.29" fill="#d3ddee" stroke="#7391c4" stroke-width="0.8"/><circle cx="248.22" cy="70.94" r="1.29" fill="#d3ddee" stroke="#7391c4" stroke-width="0.8"/><circle cx="245.78" cy="70.94" r="1.29" fill="#d3ddee" stroke="#7391c4" stroke-width="0.8"/><circle cx="244.06" cy="69.22" r="1.29" fill="#d3ddee" stroke="#7391c4" stroke-width="0.8"/><circle cx="244.06" cy="66.78" r="1.29" fill="#d3ddee" stroke="#7391c4" stroke-width="0.8"/><circle cx="245.78" cy="65.06" r="1.29" fill="#d3ddee" stroke="#7391c4" stroke-width="0.8"/><circle cx="248.22" cy="65.06" r="1.29" fill="#d3ddee" stroke="#7391c4" stroke-width="0.8"/><circle cx="249.94" cy="66.78" r="1.29" fill="#d3ddee" stroke="#7391c4" stroke-width="0.8"/><circle cx="247" cy="68" r="2.84" fill="#dbe4f2" stroke="none"/><circle cx="247" cy="68" r="1.72" fill="#f4f7fb" stroke="#7391c4" stroke-width="0.9"/><circle cx="247" cy="68" r="0.80" fill="#1d4f8e"/>
<path d="M243 74.5l8-2.6h6.3v3.6l-6.3 3h-8z" fill="#d6dbe7" stroke="#5d7fb3" stroke-width="1" stroke-linejoin="round"/><path d="M243 74.5h8v4M251 74.5l6-2.4" fill="none" stroke="#5d7fb3" stroke-width="0.8"/>
<rect x="243.5" y="89.5" width="13" height="13" fill="#f6f8fb" stroke="#4d78ba" stroke-width="1"/>
<rect x="247.5" y="90" width="8.5" height="2.4" fill="#98a4bd"/>
<g transform="translate(17.010 6.230) scale(0.93)"><path d="M245.5 97.5l5-2h4.8v3l-4 2.7h-5.8z" fill="#b9c5dc" stroke="#1d4f8e" stroke-width="0.9" stroke-linejoin="round"/><path d="M245.5 97.5h5.5v3.5" fill="none" stroke="#1d4f8e" stroke-width="0.7"/></g>
<defs><linearGradient id="gr1" x1="0" y1="0" x2="1" y2="1"><stop offset="0" stop-color="#b9c6ea"/><stop offset="0.25" stop-color="#1d22f0"/><stop offset="0.6" stop-color="#2a35e8"/><stop offset="1" stop-color="#c8d0f0"/></linearGradient><linearGradient id="gr2" x1="0" y1="0" x2="0" y2="1"><stop offset="0" stop-color="#1f4e8c"/><stop offset="0.5" stop-color="#6f8db8"/><stop offset="1" stop-color="#c8d2e2"/></linearGradient></defs>
<rect x="274" y="66" width="32" height="23.6" fill="url(#gr1)"/>
<rect x="276.6" y="68.4" width="26.8" height="18.8" fill="#fdfdfd"/>
<rect x="277" y="69.00" width="26" height="2.5" fill="url(#gr2)"/>
<rect x="277" y="72.75" width="26" height="2.5" fill="url(#gr2)"/>
<rect x="277" y="76.50" width="26" height="2.5" fill="url(#gr2)"/>
<rect x="277" y="80.25" width="26" height="2.5" fill="url(#gr2)"/>
<rect x="277" y="84.00" width="26" height="2.5" fill="url(#gr2)"/>
<rect x="275" y="102" width="30.3" height="30.3" fill="#f4f6fa" stroke="#9fb2d2" stroke-width="1.2"/>
<rect x="277.4" y="104.4" width="25.5" height="25.5" fill="#fff" stroke="#7f98c4" stroke-width="1"/>
<path d="M294.24 117.83L298.14 123.38" stroke="#1d4f8e" stroke-width="2.1" stroke-linecap="round"/>
<path d="M292.51 120.54L291.34 127.22" stroke="#1d4f8e" stroke-width="2.1" stroke-linecap="round"/>
<path d="M289.37 121.24L283.82 125.14" stroke="#1d4f8e" stroke-width="2.1" stroke-linecap="round"/>
<path d="M286.66 119.51L279.98 118.34" stroke="#1d4f8e" stroke-width="2.1" stroke-linecap="round"/>
<path d="M285.96 116.37L282.06 110.82" stroke="#1d4f8e" stroke-width="2.1" stroke-linecap="round"/>
<path d="M287.69 113.66L288.86 106.98" stroke="#1d4f8e" stroke-width="2.1" stroke-linecap="round"/>
<path d="M290.83 112.96L296.38 109.06" stroke="#1d4f8e" stroke-width="2.1" stroke-linecap="round"/>
<path d="M293.54 114.69L300.22 115.86" stroke="#1d4f8e" stroke-width="2.1" stroke-linecap="round"/>
<rect x="315.5" y="64.5" width="13" height="13" fill="#f6f8fb" stroke="#4d78ba" stroke-width="1"/>
<rect x="319.5" y="65" width="8.5" height="2.4" fill="#98a4bd"/>
<g transform="translate(22.050 4.480) scale(0.93)"><rect x="317.5" y="69" width="10" height="7.5" fill="#9a9fab" stroke="#3f3fd8" stroke-width="1"/><path d="M318 71.3h9M318 73.3h9M318 75h9" stroke="#c5c8d0" stroke-width="0.7"/></g>
<rect x="315.5" y="89.5" width="13" height="13" fill="#f6f8fb" stroke="#4d78ba" stroke-width="1"/>
<rect x="319.5" y="90" width="8.5" height="2.4" fill="#98a4bd"/>
<g transform="translate(22.050 6.230) scale(0.93)"><rect x="317.5" y="94" width="10" height="7.5" fill="#9a9fab" stroke="#d04848" stroke-width="1"/><path d="M318 96.3h9M318 98.3h9M318 100h9" stroke="#c5c8d0" stroke-width="0.7"/></g>
<rect x="315.5" y="114.5" width="13" height="13" fill="#f6f8fb" stroke="#4d78ba" stroke-width="1"/>
<rect x="319.5" y="115" width="8.5" height="2.4" fill="#98a4bd"/>
<g transform="translate(22.050 7.980) scale(0.93)"><rect x="317.5" y="119" width="10" height="7.5" fill="#9a9fab" stroke="#4ea052" stroke-width="1"/><path d="M318 121.3h9M318 123.3h9M318 125h9" stroke="#c5c8d0" stroke-width="0.7"/></g>
<rect x="340.5" y="64.5" width="13" height="13" fill="#f6f8fb" stroke="#4d78ba" stroke-width="1"/>
<rect x="344.5" y="65" width="8.5" height="2.4" fill="#98a4bd"/>
<g transform="translate(23.800 4.480) scale(0.93)"><rect x="343" y="68.5" width="9" height="8.5" fill="#fff" stroke="#b5c3de" stroke-width="0.8"/><circle cx="347.5" cy="72.8" r="2.4" fill="none" stroke="#6d8fc6" stroke-width="1.2" stroke-dasharray="1.2 1"/></g>
<path d="M373.8 66.2Q380 65.2 386.9 70Q393.5 65.2 400 66.2L400.3 76Q391.8 78.5 391.6 86L391.6 90.3H381.8V86Q381.5 78.5 373.5 76z" fill="#fff" stroke="#1d4f8e" stroke-width="1.5" stroke-linejoin="round"/>
<path d="M427.5 72.5Q432 66.5 437.8 66L438 73Q432.5 76 431 81z" fill="#f1f3f8" stroke="#9db0d0" stroke-width="1"/>
<path d="M416.5 66.2Q430 68 431.5 84V90H422.5V84Q422.5 76 416.3 73.5z" fill="#fff" stroke="#1d4f8e" stroke-width="1.5" stroke-linejoin="round"/>
<path d="M420.5 70.5Q425.5 72.5 427 78M420.5 70.5l2.2-.4M420.5 70.5l.6 2.1M434.8 70.2Q432 72.4 431.2 75M434.8 70.2l-2 0M434.8 70.2l-.2 2" fill="none" stroke="#6c8cc0" stroke-width="0.8"/>
<rect x="412.5" y="109" width="28.8" height="15.8" fill="#fff" stroke="#1d4f8e" stroke-width="1.5"/>
<path d="M421 113.8h11.5m-2.6-2.2l2.6 2.2-2.6 2.2M432.5 120.3H421m2.6-2.2l-2.6 2.2 2.6 2.2" fill="none" stroke="#5f80b4" stroke-width="0.9"/>
<rect x="461.6" y="85.2" width="10.5" height="10.5" fill="#fff" stroke="#b7c3da" stroke-width="0.9"/>
<rect x="476" y="85.2" width="10.5" height="10.5" fill="#fff" stroke="#b7c3da" stroke-width="0.9"/>
<rect x="476" y="100" width="10.5" height="10.5" fill="#fff" stroke="#b7c3da" stroke-width="0.9"/>
<path d="M472 85.2H476.5A10.3 10.3 0 0 1 486.8 95.5V99.8H477V95.5Q477 94.8 476 94.8H472z" fill="#fff" stroke="#1d4f8e" stroke-width="1.5" stroke-linejoin="round"/>
<path d="M458.8 113L466.8 105" stroke="#1d4f8e" stroke-width="1.7"/>
<path d="M469.3 99.6l.9 2.4 2.5.1-1.9 1.6.7 2.5-2.2-1.4-2.2 1.4.7-2.5-1.9-1.6 2.5-.1z" fill="#1d4f8e"/>
<path d="M505.4 68H530.4" stroke="#1d4f8e" stroke-width="1.4"/>
<path d="M518 71V81M515.6 78.6L518 81L520.4 78.6" fill="none" stroke="#1d4f8e" stroke-width="1.3"/>
<path d="M505.4 88H530.4" stroke="#1d4f8e" stroke-width="1.4"/>
<rect x="516.1" y="86.1" width="3.8" height="3.8" fill="#fff" stroke="#1d4f8e" stroke-width="1.2"/>
<path d="M505.4 106.8H530.4" stroke="#1d4f8e" stroke-width="1.4"/>
<rect x="516.1" y="104.89999999999999" width="3.8" height="3.8" fill="#fff" stroke="#1d4f8e" stroke-width="1.2"/>
<path d="M518 112V123M515.6 120.6L518 123L520.4 120.6" fill="none" stroke="#1d4f8e" stroke-width="1.3"/>
<path d="M505.4 127H530.4" stroke="#1d4f8e" stroke-width="1.4"/>
<path d="M564.8 78L572.3 78.0M569.6999999999999 80.6L572.3 78.0L569.6999999999999 75.4M548.8 78L541.3 78.0M543.9 75.4L541.3 78.0L543.9 80.6M556.8 86L556.8 93.5M554.1999999999999 90.9L556.8 93.5L559.4 90.9M556.8 70L556.8 62.5M559.4 65.1L556.8 62.5L554.1999999999999 65.1" fill="none" stroke="#1d4f8e" stroke-width="1.3"/>
<rect x="549" y="70.2" width="15.6" height="15.6" rx="1" fill="#fff" stroke="#a9b9d6" stroke-width="1.4"/>
<rect x="581.5" y="68.5" width="29" height="19" fill="#fbfbfd" stroke="#4a72b0" stroke-width="1"/>
<rect x="541.5" y="101.5" width="16.5" height="16.5" fill="#fbfbfd" stroke="#4a72b0" stroke-width="1"/>
<circle cx="555.5" cy="115" r="9.2" fill="none" stroke="#1d4f8e" stroke-width="1.3"/>
<path d="M562.5 122.5L570.5 130.5" stroke="#1d4f8e" stroke-width="3" stroke-linecap="round"/>
<path d="M628 88h30" stroke="#a5b0c9" stroke-width="3.2"/>
<path d="M629 89.6l3-3.4" stroke="#f7f7f5" stroke-width="2.5"/>
<path d="M633.5 80.3L645 69h10.3v4L645.8 84.8H633.5z" fill="#fff" stroke="#1d4f8e" stroke-width="1.2" stroke-linejoin="round"/>
<path d="M641.5 72.5L645 69h10.3L651.5 72.8z" fill="#8e9cc0" stroke="#1d4f8e" stroke-width="1"/>
<path d="M633.5 80.3H645.8V84.8H633.5zM645.8 80.3L655.3 69.3" fill="#d6dbe7" stroke="#1d4f8e" stroke-width="1"/>
<path d="M670 89.8L673.5 80.5L687.5 66.8Q691 65.2 693.3 68.2Q694.8 70.8 693 72.8L679 86.5z" fill="#fff" stroke="#1d4f8e" stroke-width="1.5" stroke-linejoin="round"/>
<path d="M676.5 83.5L690.5 69.8" stroke="#1d4f8e" stroke-width="2.6"/>
<path d="M670 89.8l1.6-4.2 2.6 2.8z" fill="#1d4f8e"/>
<path d="M708 67.4H733" stroke="#1d4f8e" stroke-width="1.4"/>
<rect x="719.1" y="65.5" width="3.8" height="3.8" fill="#fff" stroke="#1d4f8e" stroke-width="1.2"/>
<path d="M721 71V78.5M718.6 76.1L721 78.5L723.4 76.1" fill="none" stroke="#1d4f8e" stroke-width="1.3"/>
<path d="M706 84H735.5" stroke="#1d4f8e" stroke-width="1.4"/>
<rect x="717.1" y="82.1" width="3.8" height="3.8" fill="#fff" stroke="#1d4f8e" stroke-width="1.2"/>
<path d="M706 88.5H735.5" stroke="#1d4f8e" stroke-width="1.4"/>
<rect x="723.1" y="86.6" width="3.8" height="3.8" fill="#fff" stroke="#1d4f8e" stroke-width="1.2"/>
<rect x="637.8" y="103.6" width="18.6" height="18.6" fill="#fff" stroke="#1d4f8e" stroke-width="1.4"/>
<rect x="629.6" y="111.6" width="18.6" height="18.6" fill="#d6dbe7" stroke="#1d4f8e" stroke-width="1.4"/>
<path d="M681.8 112L690.5999999999999 112.0M688.3 114.3L690.5999999999999 112.0L688.3 109.7M681.8 112L673.0 112.0M675.3 109.7L673.0 112.0L675.3 114.3M681.8 112L681.8 120.8M679.5 118.5L681.8 120.8L684.0999999999999 118.5M681.8 112L681.8 103.2M684.0999999999999 105.5L681.8 103.2L679.5 105.5" fill="none" stroke="#1d4f8e" stroke-width="1.2"/>
<path d="M669.5 127H694" stroke="#1d4f8e" stroke-width="1.4"/>
<rect x="679.9" y="125.1" width="3.8" height="3.8" fill="#fff" stroke="#1d4f8e" stroke-width="1.2"/>
<path d="M719.98 120.34A8.4 8.4 0 1 1 728.04 116.57" fill="none" stroke="#1d4f8e" stroke-width="1.3"/>
<path d="M723.84 117.17L728.54 117.17L728.94 112.37" fill="none" stroke="#1d4f8e" stroke-width="1.3"/>
<path d="M708 127H734" stroke="#1d4f8e" stroke-width="1.4"/>
<rect x="719.1" y="125.1" width="3.8" height="3.8" fill="#fff" stroke="#1d4f8e" stroke-width="1.2"/>
<path d="M759.8 77.9L772.0999999999999 77.9M768.6999999999999 81.30000000000001L772.0999999999999 77.9L768.6999999999999 74.5M759.8 77.9L747.5 77.9M750.9 74.5L747.5 77.9L750.9 81.30000000000001M759.8 77.9L759.8 90.2M756.4 86.8L759.8 90.2L763.1999999999999 86.8M759.8 77.9L759.8 65.60000000000001M763.1999999999999 69.00000000000001L759.8 65.60000000000001L756.4 69.00000000000001" fill="none" stroke="#1d4f8e" stroke-width="1.3"/>
<path d="M758.54 128.61A12 12 0 1 1 770.06 123.24" fill="none" stroke="#1d4f8e" stroke-width="1.4"/>
<path d="M764.56 123.84L770.56 123.84L770.96 117.74" fill="none" stroke="#1d4f8e" stroke-width="1.4"/>
<path d="M786.3 65.3H793.3V90.5H786.3" fill="none" stroke="#1d4f8e" stroke-width="1.3"/>
<path d="M811.7 65.3H804.7V90.5H811.7" fill="none" stroke="#1d4f8e" stroke-width="1.3"/>
<path d="M799 63.099999999999994V92.7" stroke="#1d4f8e" stroke-width="1.4" stroke-dasharray="8 1.6 2.2 1.6"/>
<path d="M786.3 104.4H793.3V129.6H786.3" fill="none" stroke="#1d4f8e" stroke-width="1.3" stroke-dasharray="3 1.6"/>
<path d="M811.7 104.4H804.7V129.6H811.7" fill="none" stroke="#1d4f8e" stroke-width="1.3"/>
<path d="M799 102.2V131.79999999999998" stroke="#1d4f8e" stroke-width="1.4" stroke-dasharray="8 1.6 2.2 1.6"/>
<path d="M822.8 92.8L837 79.8H852.5L839 92.8z" fill="#d6dbe7" stroke="#1d4f8e" stroke-width="1.6" stroke-linejoin="round"/>
<path d="M822.8 76L837 63H852.5L839 76z" fill="#fff" stroke="#1d4f8e" stroke-width="1.6" stroke-linejoin="round"/>
<path d="M825.3 78v8m-2.3-2.4l2.3 2.6 2.3-2.6M850.3 68v8.5m-2.3-2.4l2.3 2.6 2.3-2.6" fill="none" stroke="#1d4f8e" stroke-width="1.5"/>
<circle cx="873.83" cy="72.39" r="1.68" fill="#d3ddee" stroke="#7c98c8" stroke-width="0.8"/><circle cx="871.59" cy="74.63" r="1.68" fill="#d3ddee" stroke="#7c98c8" stroke-width="0.8"/><circle cx="868.41" cy="74.63" r="1.68" fill="#d3ddee" stroke="#7c98c8" stroke-width="0.8"/><circle cx="866.17" cy="72.39" r="1.68" fill="#d3ddee" stroke="#7c98c8" stroke-width="0.8"/><circle cx="866.17" cy="69.21" r="1.68" fill="#d3ddee" stroke="#7c98c8" stroke-width="0.8"/><circle cx="868.41" cy="66.97" r="1.68" fill="#d3ddee" stroke="#7c98c8" stroke-width="0.8"/><circle cx="871.59" cy="66.97" r="1.68" fill="#d3ddee" stroke="#7c98c8" stroke-width="0.8"/><circle cx="873.83" cy="69.21" r="1.68" fill="#d3ddee" stroke="#7c98c8" stroke-width="0.8"/><circle cx="870" cy="70.8" r="3.70" fill="#dbe4f2" stroke="none"/><circle cx="870" cy="70.8" r="2.24" fill="#f4f7fb" stroke="#7c98c8" stroke-width="0.9"/><circle cx="870" cy="70.8" r="0.95" fill="#1d4f8e"/>
<rect x="895.5" y="65.3" width="23.5" height="25.3" rx="2.5" fill="#fff" stroke="#1d4f8e" stroke-width="1.6"/>
<rect x="898" y="68" width="18.5" height="5.6" fill="#1d4f8e"/>
<rect x="898.00" y="75.60" width="3.8" height="3.5" fill="#1d4f8e"/>
<rect x="902.90" y="75.60" width="3.8" height="3.5" fill="#1d4f8e"/>
<rect x="907.80" y="75.60" width="3.8" height="3.5" fill="#1d4f8e"/>
<rect x="912.70" y="75.60" width="3.8" height="3.5" fill="#1d4f8e"/>
<rect x="898.00" y="80.20" width="3.8" height="3.5" fill="#1d4f8e"/>
<rect x="902.90" y="80.20" width="3.8" height="3.5" fill="#1d4f8e"/>
<rect x="907.80" y="80.20" width="3.8" height="3.5" fill="#1d4f8e"/>
<rect x="912.70" y="80.20" width="3.8" height="8.1" fill="#1d4f8e"/>
<rect x="898.00" y="84.80" width="3.8" height="3.5" fill="#1d4f8e"/>
<rect x="902.90" y="84.80" width="3.8" height="3.5" fill="#1d4f8e"/>
<rect x="907.80" y="84.80" width="3.8" height="3.5" fill="#1d4f8e"/>
<path d="M933 90.5L959.5 65" stroke="#1d4f8e" stroke-width="1.1"/>
<path d="M933.5 72l4.5 5.2 12-11.5" fill="none" stroke="#128a2a" stroke-width="2.4"/>
<path d="M949 81l10.5 10.5M959.5 81L949 91.5" stroke="#e0142c" stroke-width="1.8"/>
<path d="M896.5 127L911 113" stroke="#1c3f7a" stroke-width="1.7"/>
<path d="M913.2 106l1.3 3.3 3.5.2-2.7 2.2.9 3.4-3-1.9-3 1.9.9-3.4-2.7-2.2 3.5-.2z" fill="#1c3f7a"/>
<rect x="905.5" y="107.5" width="1" height="1" fill="#2a5a9c"/>
<rect x="908.5" y="104.0" width="1" height="1" fill="#2a5a9c"/>
<rect x="918.0" y="105.5" width="1" height="1" fill="#2a5a9c"/>
<rect x="919.0" y="111.0" width="1" height="1" fill="#2a5a9c"/>
<rect x="917.0" y="115.5" width="1" height="1" fill="#2a5a9c"/>
<rect x="912.5" y="118.0" width="1" height="1" fill="#2a5a9c"/>
<rect x="908.0" y="114.0" width="1" height="1" fill="#2a5a9c"/>
<rect x="920.5" y="113.5" width="1" height="1" fill="#2a5a9c"/>
<circle cx="943.5" cy="115.5" r="9" fill="#bdf0f2" stroke="#000" stroke-width="1.6"/>
<path d="M941 108.2a7.5 7.5 0 0 0 -4.5 4.6" fill="none" stroke="#fff" stroke-width="1.3"/>
<path d="M950.3 122.3L960 131" stroke="#000" stroke-width="3.2" stroke-linecap="round"/>
<path d="M1004.58 69.01A12.5 12.5 0 1 0 1003.60 87.85" fill="none" stroke="#000" stroke-width="2.0"/>
<path d="M1003.60 87.85A12.5 12.5 0 0 0 1007.32 83.08" fill="none" stroke="#000" stroke-opacity="0.3" stroke-width="2.0"/>
<path d="M1002.60 71.60L1008.60 65.90V71.60z" fill="#000"/>
<rect x="990.15" y="78.15" width="5.90" height="5.90" rx="1.00" transform="rotate(45 993.1 81.1)" fill="none" stroke="#ee22ee" stroke-width="2.50"/><rect x="996.15" y="78.15" width="5.90" height="5.90" rx="1.00" transform="rotate(45 999.1 81.1)" fill="none" stroke="#14d0d8" stroke-width="2.50"/><rect x="990.15" y="72.15" width="5.90" height="5.90" rx="1.00" transform="rotate(45 993.1 75.1)" fill="none" stroke="#1a1af0" stroke-width="2.50"/><rect x="996.15" y="72.15" width="5.90" height="5.90" rx="1.00" transform="rotate(45 999.1 75.1)" fill="none" stroke="#f01414" stroke-width="2.50"/>
<rect x="1025.11" y="80.46" width="7.23" height="7.23" rx="1.23" transform="rotate(45 1028.722 84.078)" fill="none" stroke="#ee22ee" stroke-width="3.06"/><rect x="1032.46" y="80.46" width="7.23" height="7.23" rx="1.23" transform="rotate(45 1036.0780000000002 84.078)" fill="none" stroke="#14d0d8" stroke-width="3.06"/><rect x="1025.11" y="73.11" width="7.23" height="7.23" rx="1.23" transform="rotate(45 1028.722 76.72200000000001)" fill="none" stroke="#1a1af0" stroke-width="3.06"/><rect x="1032.46" y="73.11" width="7.23" height="7.23" rx="1.23" transform="rotate(45 1036.0780000000002 76.72200000000001)" fill="none" stroke="#f01414" stroke-width="3.06"/>
<path d="M1037.6 72.6Q1039 66.8 1045.5 67" fill="none" stroke="#000" stroke-width="2.4"/>
<path d="M1044.5 62.2l6 4.8-6 4.8z" fill="#000"/>
<path d="M31 14.5L45.5 22.5V39.5L31 47.5L16.5 39.5V22.5z" fill="#fff" stroke="#000" stroke-width="1.6" stroke-linejoin="round"/>
<path d="M16.5 22.5L31 30.5L45.5 22.5M31 30.5V47.5" fill="none" stroke="#000" stroke-width="1.3"/>
<path d="M31 14.5L45.5 22.5L31 30.5L16.5 22.5z" fill="#e9e9e9" stroke="#000" stroke-width="1.3"/>
<ellipse cx="31" cy="22.3" rx="8.2" ry="4.4" fill="#fff" stroke="#000" stroke-width="1.1"/>
<path d="M31 22.3Q27 19 24 21.5M31 22.3Q35 19.2 33 18M31 22.3Q36 23 38.5 21.8M31 22.3Q29 26 31.5 26.5" fill="none" stroke="#000" stroke-width="1"/>
<path d="M31 30.5V47.5L16.5 39.5V22.5z" fill="#f2f2f2" stroke="#000" stroke-width="1.3"/>
<path d="M18.7 26.8l4.6 2.6M25 30.3l4.3 2.4" stroke="#000" stroke-width="1.9"/>
<path d="M18.7 30.7l4.6 2.6M25 34.2l4.3 2.4" stroke="#000" stroke-width="1.9"/>
<path d="M18.7 34.6l4.6 2.6M25 38.1l4.3 2.4" stroke="#000" stroke-width="1.9"/>
<path d="M18.7 38.5l4.6 2.6M25 42.0l4.3 2.4" stroke="#000" stroke-width="1.9"/>
<rect x="61" y="13.5" width="13.5" height="13" fill="#8a8a1a" stroke="#000" stroke-width="1.2"/>
<rect x="63.5" y="14" width="8" height="6" fill="#fff"/>
<rect x="63.5" y="21.8" width="8.5" height="4.7" fill="#000"/><rect x="69" y="22.8" width="2" height="3" fill="#fff"/>
<path d="M91 21.5Q95 15 99 18.5Q101.5 22 97 24.5" fill="none" stroke="#10108a" stroke-width="1.4"/>
<path d="M88 18l1.2 5.8 5-3.3z" fill="#10108a"/>
<path d="M122.5 21.5Q118.5 15 114.500 18.5Q112 22 116.500 24.5" fill="none" stroke="#a8a8a8" stroke-width="1.4"/>
<path d="M125.5 18l-1.2 5.8-5-3.3z" fill="#a8a8a8"/>
<path d="M138.5 19l7-3.500 8.500 3.500v4.500l-8 4-7.500-3.500z" fill="#e4e4e4" stroke="#000" stroke-width="1.300" stroke-linejoin="round"/>
<path d="M146 22.800l8-3.600v4.300l-8 4z" fill="#8c8c8c" stroke="#000" stroke-width="0.900"/>
<path d="M138.5 19l7.500 3.800 8-3.600" fill="none" stroke="#000" stroke-width="0.900"/>
<path d="M144.200 17.300l4.300-5.300 5.700 1.600-3.700 5.200z" fill="#fff" stroke="#000" stroke-width="1"/>
<rect x="141.800" y="18.300" width="2" height="1.300" fill="#18c028"/><rect x="144.200" y="19.300" width="2" height="1.300" fill="#e82020"/>
<path d="M138.800 22l7.200 3.300" fill="none" stroke="#000" stroke-width="0.800"/>
<path d="M164.800 16.500l4-3 9.800 4.500 1 4.800-3 3.700-10.500-4.500z" fill="#fff" stroke="#000" stroke-width="1.300" stroke-linejoin="round"/>
<path d="M166.500 15l-1.200 6.500M169 13.800l9 4.400" fill="none" stroke="#000" stroke-width="0.900"/>
<path d="M174.500 20.500l5-1.500v4.500l-3 3.500-2-1z" fill="#8c8c8c" stroke="#000" stroke-width="0.800"/>
<path d="M173.800 25.800v2.500M177.800 24.500v3.200M175.800 26v2" stroke="#000" stroke-width="1.300"/>
<rect x="176.500" y="18.300" width="1.500" height="1.300" fill="#18b028"/><rect x="178" y="17.800" width="1.300" height="1.200" fill="#d82020"/>
<path d="M189.500 13.500h10.500v13h-10.500z" fill="#fff" stroke="#000" stroke-width="1.200"/>
<path d="M191.500 16h3v2.500h-3zM195.500 16h3v2.500h-3zM191.500 19.500h3v2.500h-3zM195.500 19.500h3v2.500h-3zM191.500 23h3v2.200h-3zM195.500 23h3v2.200h-3z" fill="#d4d4d4"/>
<path d="M196.500 19l5-5" stroke="#f01028" stroke-width="2.600"/><path d="M198 11.800h6.200v6.200z" fill="#f01028"/>
<path d="M205.300 19.300h4.400l-2.200 2.600z" fill="#555"/>
<path d="M779.5 44.500l1.500-5.500h3l1 5.500v5.500h-5.500zM786.500 44.500l1-5.500h3l1.500 5.500v5.500h-5.500z" fill="#000"/>
<rect x="784.500" y="42" width="2.500" height="4" fill="#000"/>
<rect x="780.600" y="37.800" width="2.600" height="1.600" fill="#000"/><rect x="788" y="37.800" width="2.600" height="1.600" fill="#000"/>
<rect x="804" y="35" width="1" height="21" fill="#8c8c8c"/><rect x="805" y="35" width="1" height="21" fill="#c9c9c9"/>
<rect x="995" y="35" width="1" height="21" fill="#8c8c8c"/><rect x="996" y="35" width="1" height="21" fill="#c9c9c9"/>
<circle cx="821.5" cy="42.5" r="5.5" fill="#fff" stroke="#6a6a6a" stroke-width="1.200"/>
<path d="M825.46 46.46L829.76 50.76" stroke="#000" stroke-width="2.100"/>
<path d="M827.500 42Q826.500 36 820.500 37.500Q816.500 39.500 816.500 46" fill="none" stroke="#1a1aee" stroke-width="1.700"/>
<path d="M812.500 46h8l-4 5.500z" fill="#1a1aee"/>
<circle cx="846.5" cy="43.5" r="6.5" fill="#fff" stroke="#6a6a6a" stroke-width="1.200"/>
<path d="M851.18 48.18L855.4799999999999 52.48" stroke="#000" stroke-width="2.100"/>
<path d="M846.500 38.200v10.600M841.200 43.500h10.600" stroke="#1a1aee" stroke-width="1.300"/>
<path d="M846.500 37l2.300 2.600h-4.600zM846.500 50l2.300-2.600h-4.600zM840 43.500l2.600-2.300v4.600zM853 43.500l-2.600-2.300v4.600z" fill="#1a1aee"/>
<circle cx="872.5" cy="43.5" r="6.5" fill="#fff" stroke="#6a6a6a" stroke-width="1.200"/>
<path d="M877.18 48.18L881.4799999999999 52.48" stroke="#000" stroke-width="2.100"/>
<path d="M905.500 41.500Q902 36.500 896.500 39.500Q892.500 43.500 896.500 49" fill="none" stroke="#1a1aee" stroke-width="1.700"/>
<path d="M902 37.500l5.500-2.500.5 6.500z" fill="#1a1aee"/>
<path d="M891.500 52.500h9" stroke="#000" stroke-width="1"/>
<path d="M899 50.500l5.500-5.500 2.500 2.500-5.500 5.500z" fill="#f0e020" stroke="#555" stroke-width="0.700"/><circle cx="906.200" cy="45.200" r="1.700" fill="#e02020"/>
<circle cx="924" cy="42" r="5.5" fill="#e8fafa" stroke="#6a6a6a" stroke-width="1.200"/>
<path d="M927.96 45.96L932.26 50.26" stroke="#000" stroke-width="2.100"/>
<rect x="917.500" y="43.500" width="8" height="9" fill="none" stroke="#1a1aee" stroke-width="1" stroke-dasharray="1 1"/>
<path d="M948 46.500l-2.500-2.200 1-1 2 1v-5.800h1.500v-1.200h1.500v-.300h1.600v.800h1.500v1.500h1.300v7.500l-1.200 5h-5.500z" fill="#fff" stroke="#000" stroke-width="0.900" stroke-linejoin="round"/>
<path d="M950.500 39v5M952.500 38v6M954.500 39v5" stroke="#000" stroke-width="0.700"/>
<rect x="969.500" y="37.500" width="13" height="11" fill="#fff" stroke="#444" stroke-width="1"/><rect x="970" y="38" width="12" height="2.300" fill="#30d8e8"/>
<rect x="977" y="43.500" width="8" height="9" fill="#fff" stroke="#444" stroke-width="1"/>
<path d="M972.500 44.500Q977 41.500 980 46" fill="none" stroke="#1a1aee" stroke-width="1.600"/><path d="M977.500 47.500l5 1.500-.800-5.200z" fill="#1a1aee"/>
<defs><radialGradient id="gl" cx="0.35" cy="0.3" r="0.8"><stop offset="0" stop-color="#8cc8ff"/><stop offset="0.45" stop-color="#1c6eea"/><stop offset="1" stop-color="#0a2a9a"/></radialGradient></defs>
<circle cx="1010" cy="44.800" r="8" fill="url(#gl)"/>
<path d="M1004.500 41.500q2.500-3 5.500-2.800l-1 2.500 2.500 1-1.500 3-2.500-1-2 2zM1011.500 46l3.500-1.500 1 3-2.500 3.200z" fill="#d8efff" opacity="0.900"/>
<path d="M1019.500 43.800h4.500l-2.250 2.600z" fill="#444"/>
<path d="M1030.500 46l9.500-9.500 6.500 3.500-9 10z" fill="#8a1a9a" stroke="#3a0a4a" stroke-width="0.900"/>
<path d="M1030.500 46v3.500l7 4 9-10v-3.500l-9 10z" fill="#fff" stroke="#000" stroke-width="0.900"/>
<path d="M1047.500 43.800h4.500l-2.250 2.600z" fill="#444"/>
<path d="M23.5 173.5h7.5l3.500 3.500v9.5h-11z" fill="#fff" stroke="#000" stroke-width="1"/><path d="M31.0 173.5v3.500h3.500" fill="none" stroke="#000" stroke-width="0.800"/>
<path d="M26 180.500h6M29 177.500v6" stroke="#10108a" stroke-width="1.500"/>
<path d="M47.5 173.5h7.5l3.500 3.500v9.5h-11z" fill="#fff" stroke="#000" stroke-width="1"/><path d="M55.0 173.5v3.500h3.500" fill="none" stroke="#000" stroke-width="0.800"/>
<path d="M45.500 186.500L58.500 173.500" stroke="#e8101c" stroke-width="2.600"/>
<rect x="67.500" y="172.500" width="9" height="12" fill="#f4f080" stroke="#777" stroke-width="0.800" stroke-dasharray="1 1"/>
<path d="M71.5 174.5h8.0l3.500 3.500v9.5h-11.5z" fill="#fff" stroke="#000" stroke-width="1"/><path d="M79.5 174.5v3.500h3.500" fill="none" stroke="#000" stroke-width="0.800"/>
<path d="M92.5 173.5h7.5l3.500 3.500v9.5h-11z" fill="#fff" stroke="#000" stroke-width="1"/><path d="M100.0 173.5v3.500h3.500" fill="none" stroke="#000" stroke-width="0.800"/>
<path d="M93.500 180.500l3.500-2.500h7.500v5h-7.500z" fill="#f4e810" stroke="#000" stroke-width="0.900"/><path d="M103 178v5h2.500v-5z" fill="#e82020"/>
<path d="M128.800 172.500l6.700 7h-3.700v6.500h-6v-6.500h-3.700z" fill="#1414f0"/>
<path d="M151.600 187.300l6.700-7h-3.700v-6.500h-6v6.500h-3.700z" fill="#1414f0"/>
<path d="M175.500 172.500h12.500l3 3v12h-15.500z" fill="#fff" stroke="#000" stroke-width="1"/>
<path d="M208.500 172.500v15.500h5.500v-15.500z" fill="#888"/><path d="M207.500 174.500h6.500M207.500 177h6.500M207.500 179.500h6.500M207.500 182h6.500M207.500 184.500h6.500" stroke="#000" stroke-width="1.100"/>
<path d="M200 180h9m-2.500-2l2.500 2-2.500 2" fill="none" stroke="#e81020" stroke-width="1.200"/>
<path d="M231.800 183l5.700-7 5.700 7z" fill="#000"/>
<path d="M253.800 177.800h11.400l-5.700 6.600z" fill="#000"/>
<path d="M285 185.300L294.500 175.800" stroke="#7a1a1a" stroke-width="1.700"/><path d="M286.500 176.500L296 185.500" stroke="#222" stroke-width="1.700"/>
<path d="M291.800 173l3.700-.700 2.700 2.500-.200 2.200-2.700-2-3 .500z" fill="#8e8e24" stroke="#333" stroke-width="0.700"/>
<path d="M284.800 174.200l.500 3.200 3-.800" fill="none" stroke="#222" stroke-width="1.500"/>
<path d="M285.500 209.500V202a5.500 5.500 0 0 1 11 0V209.500h-3.500V202a2 2 0 0 0 -4 0V209.500z" fill="#e8101c" stroke="#000" stroke-width="0.900"/>
<rect x="286" y="206.500" width="2.600" height="2.500" fill="#fff"/><rect x="293.400" y="206.500" width="2.600" height="2.500" fill="#fff"/>
<rect x="285.800" y="221.900" width="10.200" height="10" fill="#d6d6d6" stroke="#6e3a12" stroke-width="1.700"/>
<path d="M283 244.500h16M283 250.700h16M283 257h16M284.600 242.800v16M290.800 242.800v16M297 242.800v16" stroke="#5e5e5e" stroke-width="0.800"/>
<rect x="287.500" y="271.300" width="6" height="6" fill="#dadada" stroke="#7a3c10" stroke-width="1.300"/>
<rect x="290" y="273.800" width="1" height="1" fill="#7a3c10"/>
<rect x="283.8" y="267.5" width="1" height="1" fill="#333"/>
<rect x="290.0" y="267.5" width="1" height="1" fill="#333"/>
<rect x="296.2" y="267.5" width="1" height="1" fill="#333"/>
<rect x="283.8" y="273.9" width="1" height="1" fill="#333"/>
<rect x="296.2" y="273.9" width="1" height="1" fill="#333"/>
<rect x="283.8" y="280.5" width="1" height="1" fill="#333"/>
<rect x="290.0" y="280.5" width="1" height="1" fill="#333"/>
<rect x="296.2" y="280.5" width="1" height="1" fill="#333"/>
<rect x="283" y="293.800" width="16" height="8.800" rx="0.800" fill="#686868"/>
<path d="M284.200 295.600h13.600M284.800 297.500h13M284.200 299.400h13.600" stroke="#d0d0d0" stroke-width="0.900" stroke-dasharray="1.100 0.700"/>
<path d="M286.500 301.200h8" stroke="#d0d0d0" stroke-width="0.800"/>
<rect x="285.300" y="317.200" width="11.600" height="6" fill="#c9c9c9" stroke="#555" stroke-width="0.900"/>
<path d="M283.300 328.500h15.400M283.500 326.500v4M298.500 326.500v4" stroke="#333" stroke-width="0.900"/>
<path d="M283.500 351.200h15M288.500 337.500v13.700" stroke="#000" stroke-width="1.100"/><path d="M288.500 344.700a6.500 6.500 0 0 1 6.500 6.500" fill="none" stroke="#000" stroke-width="0.900"/><rect x="290.800" y="347.800" width="1.200" height="1.200" fill="#000"/>
<rect x="284.300" y="363.800" width="2.600" height="2.600" fill="#fff" stroke="#1a3a8a" stroke-width="1"/><rect x="294" y="364.800" width="2.800" height="2.600" fill="#fff" stroke="#1a3a8a" stroke-width="1"/><path d="M288.500 365.200h3.500" stroke="#1a3a8a" stroke-width="1.200"/>
<rect x="285.300" y="368.800" width="12" height="9.500" fill="none" stroke="#777" stroke-width="0.800" stroke-dasharray="0.900 1.100"/>
<rect x="287.800" y="370.500" width="2.500" height="2.500" fill="#fff" stroke="#e0682a" stroke-width="0.900"/><rect x="293.800" y="374.500" width="2.500" height="2.500" fill="#fff" stroke="#e0682a" stroke-width="0.900"/><path d="M291.300 371.800h3.700v2" fill="none" stroke="#e0682a" stroke-width="1"/>
<path d="M287 396.500l8 7M295 396.500l-8 7" stroke="#9c9c9c" stroke-width="1.200"/><path d="M283.500 406.500h15" stroke="#e9e9e9" stroke-width="2"/><path d="M283 405.500h15" stroke="#9c9c9c" stroke-width="1"/>
<path d="M286 423l10 9M296 423l-10 9" stroke="#9c9c9c" stroke-width="1.300"/><path d="M283.500 428.500h15" stroke="#e9e9e9" stroke-width="2"/><path d="M283 427.500h16" stroke="#9c9c9c" stroke-width="1.800"/>
<path d="M284.500 462h11" stroke="#e9e9e9" stroke-width="2.400"/><path d="M284 461h10" stroke="#9c9c9c" stroke-width="2.400"/><path d="M293 457l6 4-6 4z" fill="#9c9c9c"/><circle cx="284.500" cy="461" r="1.800" fill="#9c9c9c"/>
<path d="M292 482v10" stroke="#e9e9e9" stroke-width="2.400"/><path d="M291 482v10" stroke="#9c9c9c" stroke-width="2.400"/><path d="M287 482l4-5.500 4 5.500z" fill="#9c9c9c"/><circle cx="291" cy="492" r="1.800" fill="#9c9c9c"/>
<path d="M287.500 510.5h11" stroke="#e9e9e9" stroke-width="2.400"/><path d="M288 509.5h10" stroke="#9c9c9c" stroke-width="2.400"/><path d="M289 505.5l-6 4 6 4z" fill="#9c9c9c"/><circle cx="297.500" cy="509.5" r="1.800" fill="#9c9c9c"/>
<path d="M292 526.5v10" stroke="#e9e9e9" stroke-width="2.400"/><path d="M291 526.5v10" stroke="#9c9c9c" stroke-width="2.400"/><path d="M287 536.5l4 5.500 4-5.500z" fill="#9c9c9c"/><circle cx="291" cy="526.5" r="1.800" fill="#9c9c9c"/>
<path d="M287 563l8-8" stroke="#9c9c9c" stroke-width="2"/><circle cx="287" cy="563" r="2.300" fill="#9c9c9c"/><rect x="293" y="552.500" width="5" height="4.500" fill="#9c9c9c"/>
<rect x="287.500" y="587" width="7.500" height="11.500" fill="#e9e9e9"/><rect x="286.500" y="586" width="7.500" height="11.500" fill="#9c9c9c"/>
<path d="M287.5 586v-3.500M285.5 584.5l2-2.500 2 2.500" fill="none" stroke="#9c9c9c" stroke-width="1"/>
<rect x="287.500" y="611" width="7.500" height="11.500" fill="#e9e9e9"/><rect x="286.500" y="610" width="7.500" height="11.500" fill="#9c9c9c"/>
<path d="M290.5 610v-3.500M288.5 608.5l2-2.500 2 2.500" fill="none" stroke="#9c9c9c" stroke-width="1"/>
<rect x="287.500" y="635" width="7.500" height="11.500" fill="#e9e9e9"/><rect x="286.500" y="634" width="7.500" height="11.500" fill="#9c9c9c"/>
<path d="M294 634v-3.500M292 632.5l2-2.500 2 2.500" fill="none" stroke="#9c9c9c" stroke-width="1"/>
</svg>
<div class="t" style="left:404.00px;top:14.00px;font-size:13px;color:#fff;transform:scaleX(0.9523);-webkit-text-stroke:0.45px #fff;">CYPETHERM HVAC -</div>
<div class="t" style="left:529.60px;top:14.00px;font-size:13px;color:#fff;transform:scaleX(1.0181);-webkit-text-stroke:0.45px #fff;">v2017.c - [C:\...\Warehouse.hvd]</div>
<div class="t" style="left:71.00px;top:40.14px;font-size:12px;color:#000;transform:scaleX(0.8587);">Flow diagrams</div>
<div class="t" style="left:170.00px;top:40.14px;font-size:12px;color:#000;transform:scaleX(0.8592);">Floor plans</div>
<div class="t" style="left:104.70px;top:140.84px;font-size:12px;color:#000;transform:scaleX(0.8443);">Thermal emitters</div>
<div class="t" style="left:330.50px;top:140.84px;font-size:12px;color:#000;transform:scaleX(0.8639);">Ducts</div>
<div class="t" style="left:682.60px;top:140.84px;font-size:12px;color:#000;transform:scaleX(0.7979);">Edit</div>
<div class="t" style="left:900.70px;top:140.84px;font-size:12px;color:#000;transform:scaleX(0.8692);">Calculation</div>
<div class="t" style="left:991.70px;top:140.84px;font-size:12px;color:#000;transform:scaleX(0.8474);">BIM model</div>
<div class="t" style="left:98.70px;top:99.44px;font-size:12px;color:#000;transform:scaleX(0.8180);">Thermal</div>
<div class="t" style="left:98.70px;top:112.14px;font-size:12px;color:#000;transform:scaleX(0.8319);">emitters</div>
<div class="t" style="left:198.30px;top:99.44px;font-size:12px;color:#000;transform:scaleX(0.8391);">Straight</div>
<div class="t" style="left:204.70px;top:112.14px;font-size:12px;color:#000;transform:scaleX(0.9038);">duct</div>
<div class="t" style="left:371.40px;top:99.44px;font-size:12px;color:#000;transform:scaleX(0.8274);">Fittings</div>
<div class="t" style="left:981.50px;top:99.44px;font-size:12px;color:#000;transform:scaleX(0.8174);">Import</div>
<div class="t" style="left:1020.40px;top:99.44px;font-size:12px;color:#000;transform:scaleX(0.8217);">Export</div>
<div class="t" style="left:25.90px;top:198.94px;font-size:12px;color:#000;transform:scaleX(0.8558);">Floor plans</div>
<div class="t" style="left:233.40px;top:198.94px;font-size:12px;color:#000;transform:scaleX(0.8167);">DXF</div>
<div class="t" style="left:23.70px;top:222.14px;font-size:12px;color:#000;transform:scaleX(0.8865);">1000-HVAC-001 DUCT LAYOUT</div>
<div class="t" style="left:712.00px;top:425.13px;font-size:14.5px;color:#b9997c;transform:scaleX(0.9248);">BOX STORE</div>
<div class="t" style="left:552.20px;top:72.84px;font-size:12px;color:#1d4f8e;font-weight:bold;transform:scaleX(1.0617);">A</div>
<div class="t" style="left:584.20px;top:69.90px;font-size:8.5px;color:#1d4f8e;font-weight:bold;transform:scaleX(0.8235);">Tx...</div>
<div class="t" style="left:544.70px;top:102.03px;font-size:16.5px;color:#1d4f8e;font-weight:bold;transform:scaleX(0.9651);">A</div>
<div class="t" style="left:868.80px;top:40.40px;font-size:8.5px;color:#1a1aee;transform:scaleX(0.8255);">×2</div>
<div class="t" style="left:1037.00px;top:39.53px;font-size:8px;color:#f0e020;font-weight:bold;transform:scaleX(0.8184);">?</div>
<div class="t" style="left:177.50px;top:175.22px;font-size:6px;color:#000;font-weight:bold;transform:scaleX(0.9167);">DXF</div>
<div class="t" style="left:177.50px;top:181.22px;font-size:6px;color:#000;font-weight:bold;transform:scaleX(0.7843);">DWG</div>
<div class="t" style="left:198.00px;top:173.80px;font-size:6.5px;color:#8a1010;font-weight:bold;transform:scaleX(0.8462);">DXF</div>
<div class="t" style="left:198.00px;top:183.30px;font-size:6.5px;color:#8a1010;font-weight:bold;transform:scaleX(0.7240);">DWG</div>
<div class="t" style="left:287.60px;top:318.44px;font-size:5.5px;color:#000;font-weight:bold;transform:scaleX(0.9154);">4.4</div>
<div class="t" style="left:286.50px;top:550.45px;font-size:7.5px;color:#9c9c9c;font-weight:bold;transform:scaleX(0.8731);">?</div>
</body></html>
